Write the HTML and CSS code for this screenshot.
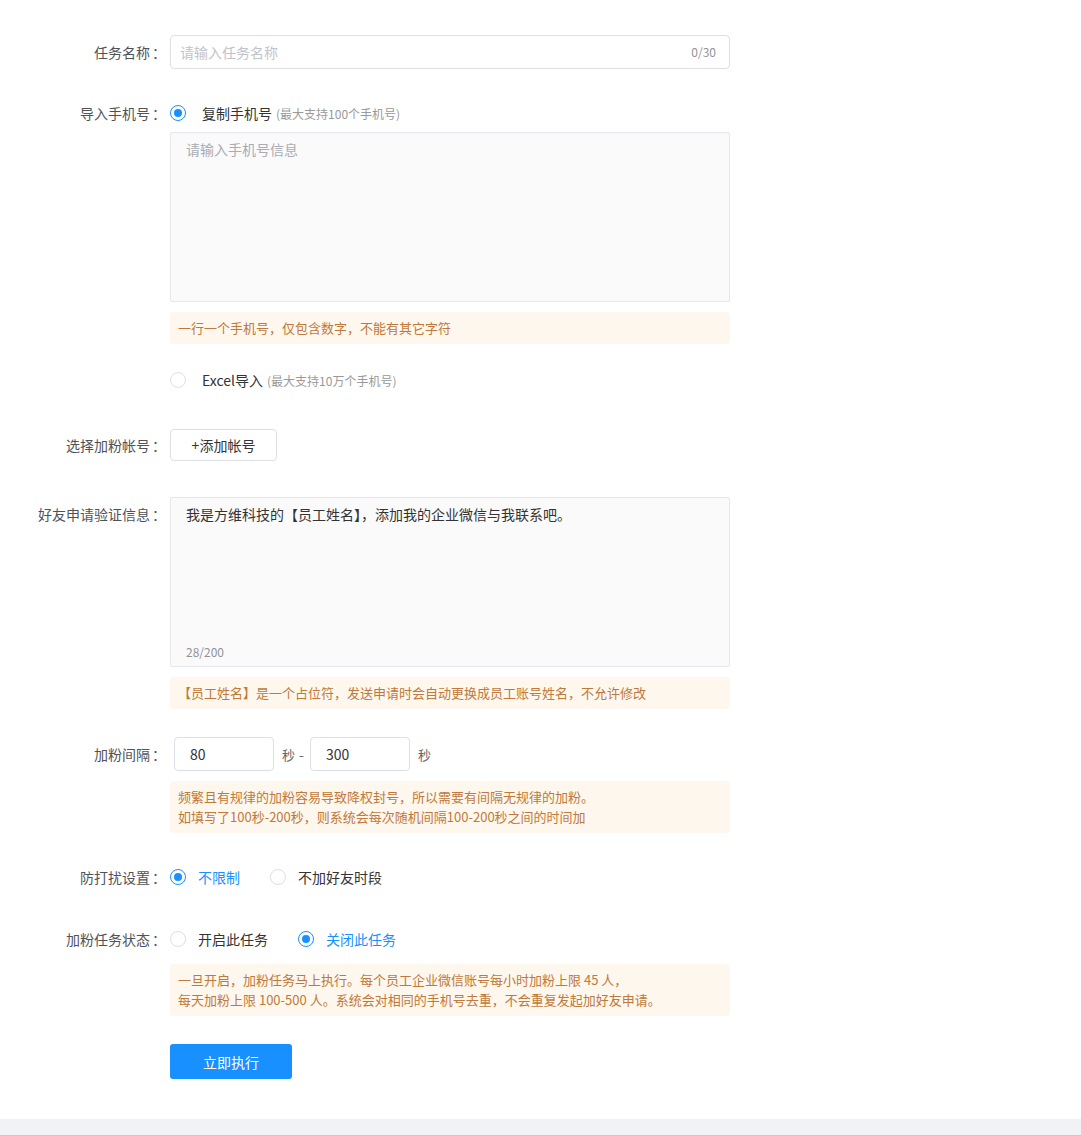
FILE: index.html
```html
<!DOCTYPE html>
<html lang="zh-CN">
<head>
<meta charset="utf-8">
<title>加粉任务</title>
<link rel="stylesheet" href="styles.css">
</head>
<body>
<div class="page">
  <form class="form">
    <div class="item item-name">
      <label class="label lh34">任务名称<span class="colon">：</span></label>
      <div class="content">
        <div class="input-wrap">
          <input class="input" type="text" placeholder="请输入任务名称">
          <span class="count">0/30</span>
        </div>
      </div>
    </div>

    <div class="item item-phone">
      <label class="label lh32">导入手机号<span class="colon">：</span></label>
      <div class="content">
        <div class="radio-line">
          <span class="radio checked"></span>
          <span class="radio-text wide">复制手机号</span>
          <span class="radio-hint">(最大支持100个手机号)</span>
        </div>
        <textarea class="textarea ta-phone" placeholder="请输入手机号信息"></textarea>
        <div class="tip">一行一个手机号，仅包含数字，不能有其它字符</div>
        <div class="radio-line line-excel">
          <span class="radio"></span>
          <span class="radio-text wide">Excel导入</span>
          <span class="radio-hint">(最大支持10万个手机号)</span>
        </div>
      </div>
    </div>

    <div class="item item-account">
      <label class="label lh32">选择加粉帐号<span class="colon">：</span></label>
      <div class="content">
        <button type="button" class="btn-plain">+添加帐号</button>
      </div>
    </div>

    <div class="item item-verify">
      <label class="label label-top">好友申请验证信息<span class="colon">：</span></label>
      <div class="content">
        <div class="ta-wrap">
          <div class="textarea ta-verify">我是方维科技的【员工姓名】，添加我的企业微信与我联系吧。</div>
          <span class="ta-count">28/200</span>
        </div>
        <div class="tip">【员工姓名】是一个占位符，发送申请时会自动更换成员工账号姓名，不允许修改</div>
      </div>
    </div>

    <div class="item item-interval">
      <label class="label lh34">加粉间隔<span class="colon">：</span></label>
      <div class="content">
        <div class="interval">
          <input class="input small" type="text" value="80">
          <span class="unit">秒</span>
          <span class="dash">-</span>
          <input class="input small" type="text" value="300">
          <span class="unit">秒</span>
        </div>
        <div class="tip tip-2">频繁且有规律的加粉容易导致降权封号，所以需要有间隔无规律的加粉。<br>如填写了100秒-200秒，则系统会每次随机间隔100-200秒之间的时间加</div>
      </div>
    </div>

    <div class="item item-dnd">
      <label class="label lh32">防打扰设置<span class="colon">：</span></label>
      <div class="content">
        <div class="radio-line">
          <span class="radio checked"></span>
          <span class="radio-text active">不限制</span>
          <span class="radio"></span>
          <span class="radio-text">不加好友时段</span>
        </div>
      </div>
    </div>

    <div class="item item-status">
      <label class="label lh32">加粉任务状态<span class="colon">：</span></label>
      <div class="content">
        <div class="radio-line">
          <span class="radio"></span>
          <span class="radio-text">开启此任务</span>
          <span class="radio checked"></span>
          <span class="radio-text active">关闭此任务</span>
        </div>
        <div class="tip tip-2 tip-status">一旦开启，加粉任务马上执行。每个员工企业微信账号每小时加粉上限 45 人，<br>每天加粉上限 100-500 人。系统会对相同的手机号去重，不会重复发起加好友申请。</div>
      </div>
    </div>

    <div class="item item-submit">
      <div class="label"></div>
      <div class="content">
        <button type="button" class="btn-primary">立即执行</button>
      </div>
    </div>
  </form>
  <div class="footer-band"></div>
</div>
</body>
</html>
```

FILE: styles.css
```css
* { box-sizing: border-box; }
html, body {
  margin: 0;
  padding: 0;
  background: #fff;
}
body {
  font-family: "Noto Sans CJK SC", "Liberation Sans", sans-serif;
  font-size: 14px;
  color: #333;
}
.page {
  width: 1081px;
}
.form {
  padding-top: 35px;
  padding-bottom: 40px;
}
.item {
  display: flex;
  align-items: flex-start;
}
.label {
  width: 164px;
  flex: none;
  text-align: right;
  color: #4f5358;
  font-size: 14px;
  white-space: nowrap;
}
.colon {
  display: inline-block;
  padding-left: 2px;
  margin-right: -2px;
}
.lh34 { line-height: 34px; }
.lh32 { line-height: 32px; }
.label-top { padding-top: 7px; line-height: 20px; }
.content {
  margin-left: 6px;
  width: 560px;
}

/* spacing between rows */
.item-phone { margin-top: 28px; }
.item-account { margin-top: 33px; }
.item-verify { margin-top: 36px; }
.item-interval { margin-top: 28px; }
.item-dnd { margin-top: 28px; }
.item-status { margin-top: 30px; }
.item-submit { margin-top: 28px; }

/* input */
.input-wrap {
  position: relative;
  width: 560px;
}
.input {
  display: block;
  width: 100%;
  height: 34px;
  border: 1px solid #dcdfe6;
  border-radius: 4px;
  padding: 0 50px 0 9px;
  font-family: inherit;
  font-size: 14px;
  color: #333;
  background: #fff;
  outline: none;
}
.input::placeholder { color: #c0c4cc; }
.count {
  position: absolute;
  right: 14px;
  top: 0;
  line-height: 34px;
  font-size: 12px;
  color: #909399;
}

/* radios */
.radio-line {
  display: flex;
  align-items: center;
  height: 32px;
}
.radio {
  width: 16px;
  height: 16px;
  flex: none;
  border: 1px solid #dcdfe6;
  border-radius: 50%;
  background: #fff;
  position: relative;
}
.radio.checked {
  border-color: #1890ff;
}
.radio.checked::after {
  content: "";
  position: absolute;
  left: 3px;
  top: 3px;
  width: 8px;
  height: 8px;
  border-radius: 50%;
  background: #1890ff;
}
.radio-text {
  margin-left: 12px;
  margin-right: 30px;
  color: #333;
  font-size: 14px;
  white-space: nowrap;
}
.radio-text.wide { margin-left: 16px; margin-right: 4px; }
.radio-text.active { color: #1890ff; }
.radio-hint {
  font-size: 12px;
  color: #999;
  white-space: nowrap;
}
.line-excel { margin-top: 20px; }

/* textarea */
.textarea {
  display: block;
  width: 560px;
  height: 170px;
  border: 1px solid #e4e7ed;
  border-radius: 2px;
  background: #fafafa;
  padding: 6px 15px;
  font-family: inherit;
  font-size: 14px;
  line-height: 20px;
  color: #333;
  resize: none;
  outline: none;
}
.textarea::placeholder { color: #a9acb2; }
.ta-phone { margin-top: 3px; }
.ta-wrap { position: relative; }
.ta-count {
  position: absolute;
  left: 16px;
  bottom: 8px;
  font-size: 12px;
  color: #909399;
  line-height: 14px;
}

/* tips */
.tip {
  margin-top: 10px;
  background: #fef7ee;
  border-radius: 4px;
  color: #c0793a;
  font-size: 13px;
  line-height: 20px;
  padding: 6px 8px;
  min-height: 32px;
}
.tip-status { margin-top: 9px; }

/* buttons */
.btn-plain {
  height: 32px;
  width: 107px;
  border: 1px solid #dcdfe6;
  border-radius: 4px;
  background: #fff;
  font-family: inherit;
  font-size: 14px;
  color: #333;
  padding: 0;
  cursor: pointer;
}
.btn-primary {
  width: 122px;
  height: 35px;
  border: none;
  border-radius: 3px;
  background: #1890ff;
  color: #fff;
  font-family: inherit;
  font-size: 14px;
  padding: 0;
  cursor: pointer;
}

/* interval */
.interval {
  display: flex;
  align-items: center;
  padding-left: 4px;
}
.input.small {
  width: 100px;
  padding: 0 15px;
}
.unit {
  margin-left: 8px;
  font-size: 13px;
  color: #666;
}
.dash {
  margin-left: 4px;
  margin-right: 6px;
  color: #666;
}

.footer-band {
  height: 17px;
  background: #f0f2f5;
  border-bottom: 1px solid #c3cad3;
}
```
